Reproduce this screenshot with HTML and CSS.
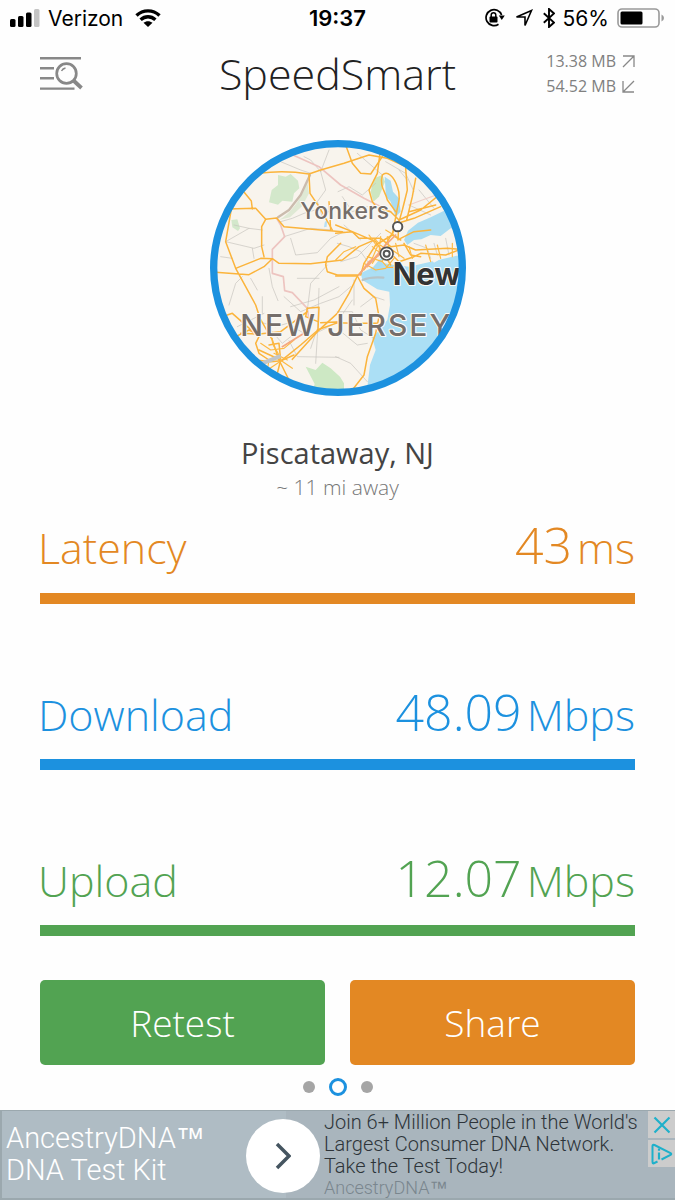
FILE: index.html
```html
<!DOCTYPE html>
<html lang="en">
<head>
  <meta charset="utf-8">
  <meta name="viewport" content="width=device-width, initial-scale=1">
  <title>SpeedSmart</title>
  <link rel="stylesheet" href="styles.css">
</head>
<body>

<div class="app">
  <div class="status-bar">
    <div class="status-left">
      <svg class="icon" width="30" height="18" viewBox="0 0 30 18">
        <rect x="0" y="10" width="5.5" height="8" rx="1.5"/>
        <rect x="8" y="7" width="5.5" height="11" rx="1.5"/>
        <rect x="16" y="3.5" width="5.5" height="14.5" rx="1.5"/>
        <rect x="24" y="0" width="5.5" height="18" rx="1.5" fill="#c4c4c4"/>
      </svg>
      <span class="carrier">Verizon</span>
      <svg class="icon" width="26" height="18" viewBox="0 0 26 18">
        <path d="M1.500 6.500C8 .3 18 .3 24.500 6.500M5.600 10.700C10 6.700 16 6.700 20.400 10.700" fill="none" stroke="#000" stroke-width="3.400"/>
        <path d="M8.500 13.800C11 11.600 15 11.600 17.500 13.800L13 18Z"/>
      </svg>
    </div>
    <div class="clock">19:37</div>
    <div class="status-right">
      <svg class="icon" width="21" height="20" viewBox="0 0 21 20">
        <path d="M17.600 7A8 8 0 1 0 14.500 16.300" fill="none" stroke="#000" stroke-width="1.700"/>
        <path d="M14.800 7.500h6L17.800 12Z"/>
        <rect x="5.500" y="8.600" width="8" height="6" rx=".8"/>
        <path d="M7.200 9V7a2.300 2.300 0 0 1 4.600 0v2" fill="none" stroke="#000" stroke-width="1.500"/>
      </svg>
      <svg class="icon arrow" width="18" height="18" viewBox="0 0 18 18">
        <path d="M1.500 8L16.500 1.500L10 16.500V8Z" fill="none" stroke="#000" stroke-width="1.600"/>
      </svg>
      <svg class="icon" width="12" height="20" viewBox="0 0 12 20">
        <path d="M.8 5.200L11 14.500L6 19V1L11 5.500L.8 14.800" fill="none" stroke="#000" stroke-width="1.900"/>
      </svg>
      <span class="percent">56%</span>
      <svg class="icon" width="48" height="20" viewBox="0 0 48 20">
        <rect x="1" y="1" width="41" height="18" rx="4" fill="none" stroke="#999" stroke-width="1.600"/>
        <rect x="3.500" y="3.500" width="22" height="13" rx="1.500"/>
        <path d="M44.500 6.500Q47 7.500 47 10T44.500 13.500Z" fill="#999"/>
      </svg>
    </div>
  </div>

  <header class="header">
    <button class="history" aria-label="History">
      <svg width="43" height="36" viewBox="0 0 43 36" fill="none" stroke="#888" stroke-width="2.400">
        <path d="M0 2.200H41M0 12.200H14M0 22.300H14M0 32.600H34.500"/>
        <circle cx="26.500" cy="17.500" r="9.800" stroke-width="2.700"/>
        <path d="M33.500 24.500L41.500 32" stroke-width="3.800"/>
        <path d="M21.500 15Q22.800 12.500 25.500 12" stroke-width="1.400"/>
      </svg>
    </button>
    <h1 class="title">SpeedSmart</h1>
    <div class="usage">
      <div class="usage-row">13.38 MB
        <svg width="13" height="13" viewBox="0 0 13 13"><path d="M1 1H12V12M12 1L1 12" fill="none" stroke="#888" stroke-width="1.300"/></svg>
      </div>
      <div class="usage-row">54.52 MB
        <svg width="13" height="13" viewBox="0 0 13 13"><path d="M1 1V12H12M1 12L12 1" fill="none" stroke="#888" stroke-width="1.300"/></svg>
      </div>
    </div>
  </header>

  <main class="main">
    <svg class="map" width="256" height="256" viewBox="28 30 768 768" role="img" aria-label="Map of the server location">
      <defs>
        <clipPath id="mapClip"><circle cx="412" cy="414" r="372"/></clipPath>
      </defs>
      <g clip-path="url(#mapClip)" stroke-linejoin="round" stroke-linecap="round">
        <rect x="28" y="30" width="768" height="768" fill="#f8f4ed"/>
        <!-- parks -->
        <path d="M232 135L255 140L270 132L292 152L296 175L280 190L275 215L245 212L232 224L205 217L213 180L232 165Z" fill="#d3e8cb"/>
        <path d="M92 270L110 268L118 295L112 303L95 292Z" fill="#d3e8cb"/>
        <path d="M520 145L545 135L553 155L535 200L518 215L510 185Z" fill="#cde6c0"/>
        <path d="M315 710L345 720L365 698L390 715L418 740L430 760V800H330L342 762Z" fill="#cde8c4"/>
        <path d="M320 155C300 210 270 250 235 270L268 262L305 228L325 190Z" fill="#dfe9d4"/>
        <!-- water -->
        <path d="M552 140L570 152L577 185L595 205L600 245L585 260L570 215L556 200Z" fill="#a9dcf1"/>
        <path d="M800 225L735 240L690 262L652 278L622 302L610 330L620 345L640 330L662 328L690 315L720 318L750 295L800 300Z" fill="#a9dcf1"/>
        <path d="M480 430L545 398L580 405L625 410L690 395L800 370V800H508L500 770L508 705L525 660L515 625L560 570L568 525L566 485L530 478L485 450Z" fill="#abdff5"/>
        <path d="M535 390L548 380L545 400L525 430L510 420Z" fill="#a9dcf1"/>
        <path d="M372 278L380 265L378 290L370 292Z" fill="#b7dff3"/>
        <path d="M620 345L690 322L790 310V368L740 375L700 398L685 380L620 385Z" fill="#f8f4ed"/>
        <path d="M486 450Q510 440 548 443" stroke="#b7c4c8" stroke-width="7" fill="none"/>
        <!-- local roads -->
        <g fill="none" stroke="#c6c3bd" stroke-width="2">
          <path d="M75 335L145 295L185 300M75 335L160 355L190 345M145 295L100 285M155 355L160 385M60 380L95 385"/>
          <path d="M240 275L275 265L310 250L360 235L395 250M250 320L330 295L395 300M270 325L285 375L350 368L390 325L430 305"/>
          <path d="M360 125L385 60M360 125L375 180L350 215L365 260M360 125L330 90L310 80M240 95L300 120L330 130"/>
          <path d="M412 185L445 170L485 195L525 160M470 70L545 135M555 95L615 130L640 185M425 200L455 245L500 230"/>
          <path d="M85 525L105 460L125 440M150 445L170 480M205 415L215 470L232 512"/>
          <path d="M250 500L300 545L360 520L415 500L450 470M270 530L340 510L415 470M380 405L330 460L320 540M290 445L355 445M355 475L350 620L345 700"/>
          <path d="M175 575L225 590L260 580L310 610M210 600L245 640L270 620M110 590L150 570L190 550M185 500V550M265 632L290 680L415 682M330 655L345 610L385 590"/>
          <path d="M410 545H455L480 600L520 625M415 600L470 645L500 640M405 680L450 700L500 755M455 510L420 560M460 450V525M480 530L520 500L550 510"/>
          <path d="M410 340L445 350L480 365L505 400M420 395L470 380L515 335L540 310M430 285L480 330M640 340L680 355L690 385M700 340L710 375M735 325L745 375"/>
          <path d="M625 225L690 255M655 180L700 235M595 120L620 150"/>
        </g>
        <!-- state border -->
        <path d="M265 70L355 110L420 165L490 205L570 245M228 265L240 285L252 320L215 358V430L248 440L252 482L275 488L320 535L325 570" fill="none" stroke="#edc4c0" stroke-width="5"/>
        <path d="M625 225L665 210L720 190" fill="none" stroke="#efd0c9" stroke-width="4"/>
        <path d="M328 135L300 195L265 240L232 262" fill="none" stroke="#cbbcae" stroke-width="7"/>
        <!-- highways -->
        <g fill="none" stroke="#fbb43c" stroke-width="4.500">
          <path d="M175 130Q250 120 325 132L360 120L430 100L505 75L560 85L615 110M325 135L328 190L355 230L395 300"/>
          <path d="M125 180L152 213L155 237M80 237L165 235L195 268L228 264L250 290L360 300L425 305"/>
          <path d="M92 237L75 335L105 415M195 268L183 290V350L190 380M45 427L145 434L190 410L215 386L180 385L105 415L135 470L165 525L178 565"/>
          <path d="M215 386L235 400L330 401L425 390L475 350L525 328M375 405L380 380L420 340"/>
          <path d="M375 405L380 425L410 435H470"/>
          <path d="M385 215L390 300M435 45L455 100L480 130L510 132L545 80"/>
          <path d="M540 55L530 130L505 180L515 215L530 235L570 245L595 270L592 330M545 135C560 120 580 140 590 170C600 195 595 215 590 235L575 315M545 135C535 170 555 185 560 210L585 245"/>
          <path d="M615 115L620 180L605 240L595 275M645 145L635 200L618 270M595 270L660 240L740 175M592 280L640 265L720 230M625 245L705 225"/>
          <path d="M405 310L455 305L475 325H540L570 350L610 345L645 360L740 355L800 360M405 285L455 305L525 335L555 380L570 405"/>
          <path d="M405 438H470L505 400L535 375L560 335L595 275M470 438L490 475L525 505L535 560L525 610L500 680L490 735L455 780"/>
          <path d="M470 438L445 490L410 550L350 605L275 688M480 435L490 400L525 345L575 315L600 330"/>
          <path d="M405 578L460 580L530 580M580 380L595 395L640 380L660 370L735 375L800 350M610 340L630 375L660 380M600 325L640 305L690 300"/>
          <path d="M80 555L95 550L140 590L165 610M165 610L145 600L95 625M178 565L215 630L235 690L265 750M320 535L355 532L352 600L300 645L242 692"/>
          <path d="M165 690L210 695L242 692L280 675M175 660L240 690L225 750M175 620L165 640L175 670L205 690M205 645L235 640L240 690M120 610L175 612L240 605L320 545M320 535L315 560L352 575M360 578L420 575L350 600"/>
        </g>
        <g fill="none" stroke="#fdba45" stroke-width="3.500">
          <path d="M505 315L530 350L515 385L490 420M520 325L545 350L575 360L610 385M515 350L540 370L580 365M540 320L535 370L515 400M560 320L565 360M500 380L545 395L560 350M490 400L525 420L555 415L580 385"/>
          <path d="M585 340L595 380M625 350L635 385M675 345L690 395M710 345L720 385M755 340V380M555 300L595 325M180 640L210 660L250 655L280 630M205 690L200 720L242 692L275 715"/>
          <path d="M215 625C210 650 235 660 240 692M220 670L260 690M405 390L430 365L465 350M545 395L560 412H600"/>
        </g>
        <path d="M245 650L310 610M475 435L505 395L535 375M500 410L550 350L585 315" fill="none" stroke="#f5a780" stroke-width="5"/>
        <path d="M185 700L235 680" stroke="#c1c5c8" stroke-width="12"/>
        <!-- labels -->
        <g class="map-label">
          <text x="299" y="266" font-size="69" font-weight="500" fill="#756e6a">Yonkers</text>
          <text class="region" x="119" y="619" font-size="90" font-weight="500" fill="#756e6a">NEW JERSEY</text>
          <text x="576" y="464" font-size="93" font-weight="700" fill="#333">New</text>
        </g>
        <circle cx="591" cy="290" r="14" fill="#fff" stroke="#555" stroke-width="6"/>
        <circle cx="558" cy="371" r="19" fill="#fff" stroke="#555" stroke-width="5"/>
        <circle cx="558" cy="371" r="9" fill="#fff" stroke="#555" stroke-width="6"/>
      </g>
      <circle cx="412" cy="414" r="373" fill="none" stroke="#1c91df" stroke-width="22"/>
    </svg>

    <h2 class="city">Piscataway, NJ</h2>
    <p class="distance">~ 11 mi away</p>

    <section class="results">
      <div class="result latency">
        <span class="label">Latency</span>
        <span class="value">43<span class="unit">ms</span></span>
      </div>
      <div class="result download">
        <span class="label">Download</span>
        <span class="value">48.09<span class="unit">Mbps</span></span>
      </div>
      <div class="result upload">
        <span class="label">Upload</span>
        <span class="value">12.07<span class="unit">Mbps</span></span>
      </div>
    </section>

    <div class="actions">
      <button class="btn retest">Retest</button>
      <button class="btn share">Share</button>
    </div>

    <nav class="pager">
      <button class="dot" aria-label="Page 1"></button>
      <button class="dot active" aria-label="Page 2"></button>
      <button class="dot" aria-label="Page 3"></button>
    </nav>
  </main>

  <aside class="ad">
    <a class="ad-link" href="#">
      <span class="ad-brand">AncestryDNA<span class="tm">™</span><br>DNA Test Kit</span>
      <span class="ad-go">
        <svg width="16" height="28" viewBox="0 0 16 28"><path d="M2 2L14 14L2 26" fill="none" stroke="#455560" stroke-width="3.500"/></svg>
      </span>
      <span class="ad-text">
        <span class="ad-line">Join 6+ Million People in the World's</span>
        <span class="ad-line">Largest Consumer DNA Network.</span>
        <span class="ad-line">Take the Test Today!</span>
        <span class="ad-source">AncestryDNA<span class="tm">™</span></span>
      </span>
    </a>
    <div class="ad-controls">
      <button class="ad-btn" aria-label="Close ad">
        <svg width="18" height="18" viewBox="0 0 18 18"><path d="M1.500 1.500L16.500 16.500M16.500 1.500L1.500 16.500" stroke="#1fb0ca" stroke-width="2.200"/></svg>
      </button>
      <button class="ad-btn" aria-label="Ad choices">
        <svg width="22" height="22" viewBox="0 0 22 22" fill="none" stroke="#1fb0ca">
          <path d="M6.500 18.500L2.500 20.500Q1.500 20.500 1.500 19V3Q1.500 1.200 3.500 2L19.500 10Q21 11 19.500 12L10.500 16.500" stroke-width="2"/>
          <path d="M8 9.500V16.500M8 5.500V7.800" stroke-width="2.200"/>
        </svg>
      </button>
    </div>
  </aside>
</div>

</body>
</html>
```

FILE: styles.css
```css
* { box-sizing: border-box; }
body {
  margin: 0;
  background-color: #fefefe;
  font-family: "Open Sans", "Noto Sans", sans-serif;
  font-weight: 300;
}
button {
  padding: 0;
  border: none;
  background: none;
  font-family: inherit;
  font-weight: inherit;
  cursor: pointer;
}
svg { display: block; }
.app {
  min-height: 100vh;
  display: flex;
  flex-direction: column;
}

/* phone status bar */
.status-bar {
  height: 36px;
  padding: 0 10px;
  display: grid;
  grid-template-columns: 1fr auto 1fr;
  align-items: center;
  font-family: Inter, Roboto, sans-serif;
  font-size: 22px;
  font-weight: 400;
  color: #000;
}
.status-left, .status-right {
  display: flex;
  align-items: center;
  gap: 8px;
}
.carrier, .percent { font-size: 21px; }
.status-right { justify-content: flex-end; }
.status-left .icon:last-child { margin-left: 4px; }
.arrow { margin: 0 2px; }
.clock { font-weight: 600; }

/* title row */
.header {
  height: 80px;
  padding: 0 40px 4px;
  display: grid;
  grid-template-columns: 1fr auto 1fr;
  align-items: center;
}
.history { justify-self: start; }
.title {
  margin: 0;
  font-size: 43px;
  line-height: 60px;
  font-weight: 300;
  color: #222;
}
.usage {
  justify-self: end;
  font-size: 16px;
  line-height: 25px;
  font-weight: 400;
  color: #808080;
}
.usage-row {
  display: flex;
  align-items: center;
  gap: 6px;
}

.main {
  flex: 1;
  padding: 24px 40px 0;
}
.map { margin: 0 auto; }
.map-label {
  font-family: Inter, Roboto, sans-serif;
  paint-order: stroke;
  stroke: #fcfaf6;
  stroke-width: 6px;
}
.region { letter-spacing: 6px; }
.city {
  margin: 37px 0 0;
  font-size: 29px;
  line-height: 40px;
  font-weight: 400;
  text-align: center;
  color: #444;
}
.distance {
  margin: 0;
  font-size: 21px;
  line-height: 28px;
  text-align: center;
  color: #777;
}

/* results */
.results {
  margin-top: 16px;
  display: flex;
  flex-direction: column;
  gap: 80px;
}
.result {
  height: 87px;
  border-bottom: 11px solid;
  display: flex;
  justify-content: space-between;
  align-items: baseline;
}
.result + .result { height: 86px; }
.label, .unit { font-size: 43px; }
.label { margin-left: -2px; }
.value {
  font-size: 50px;
  line-height: 56px;
}
.unit { margin-left: 5px; }
.latency { color: #e38823; }
.download { color: #1c91df; }
.upload { color: #52a352; }

.actions {
  margin-top: 44px;
  display: flex;
  gap: 25px;
}
.btn {
  flex: 1;
  height: 85px;
  border-radius: 5px;
  font-size: 37px;
  color: #fff;
}
.retest { background-color: #52a352; }
.share { background-color: #e38823; }

.pager {
  margin-top: 13px;
  display: flex;
  justify-content: center;
  align-items: center;
  gap: 14px;
}
.dot {
  width: 12px;
  height: 12px;
  border-radius: 50%;
  background-color: #a5a5a5;
}
.dot.active {
  width: 18px;
  height: 18px;
  border: 3px solid #1c91df;
  background-color: #fff;
}

/* ad banner */
.ad {
  height: 90px;
  display: flex;
  background-color: #a9b5bd;
  border: 2px solid #9ba8ae;
  border-width: 1px 0 2px 2px;
  font-family: Roboto, sans-serif;
}
.ad-link {
  flex: 1;
  display: flex;
  text-decoration: none;
  position: relative;
}
.ad-brand {
  width: 284px;
  padding: 11px 4px;
  background-color: #afbcc4;
  font-size: 29px;
  line-height: 32px;
  color: #fff;
}
.tm { font-family: "Liberation Sans", Arial, sans-serif; }
.ad-go {
  position: absolute;
  left: 244px;
  top: 8px;
  width: 74px;
  height: 74px;
  border-radius: 50%;
  background-color: #fff;
  display: flex;
  justify-content: center;
  align-items: center;
}
.ad-text {
  padding-left: 38px;
  display: flex;
  flex-direction: column;
  font-size: 20px;
  line-height: 22px;
  color: #2d3439;
  white-space: nowrap;
}
.ad-source {
  font-size: 18px;
  line-height: 21px;
  color: #7a868e;
}
.ad-controls {
  display: flex;
  flex-direction: column;
  gap: 2px;
}
.ad-btn {
  width: 27px;
  height: 27px;
  background-color: #ccc;
  display: flex;
  justify-content: center;
  align-items: center;
}
```
